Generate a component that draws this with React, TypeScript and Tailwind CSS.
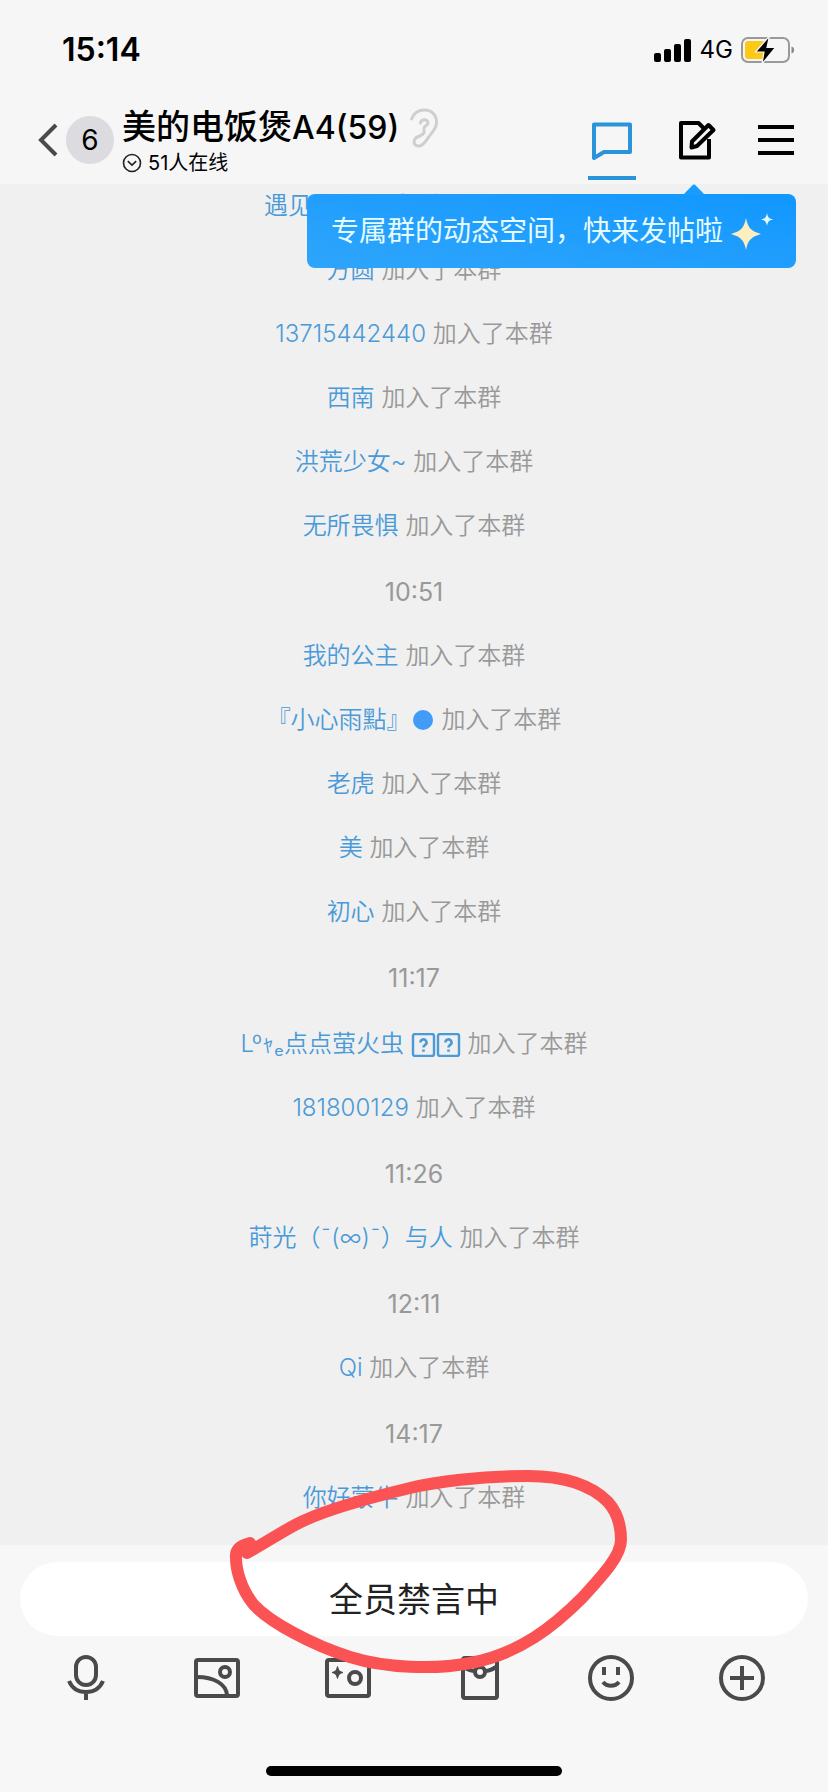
import React from 'react';

type Row = { kind: 'time'; text: string } | { kind: 'join'; name: React.ReactNode; style?: string };

const MissingGlyph = () => (
  <svg viewBox="0 0 25 24" className="inline-block w-[25px] h-6 align-[-5px]" fill="none">
    <rect x="2" y="1" width="21" height="22" rx="2" stroke="#4a9ad8" strokeWidth="2.400" />
    <path d="M9.5 9.5a3 3 0 1 1 4.6 2.4c-1.1.8-1.6 1.2-1.6 2.6M12.5 16.4v2.400" stroke="#4a9ad8" strokeWidth="2.600" />
  </svg>
);

const ROWS: Row[] = [
  { kind: 'join', name: '遇见', style: 'w-[300px] text-left' },
  { kind: 'join', name: '方圆' },
  { kind: 'join', name: '13715442440' },
  { kind: 'join', name: '西南' },
  { kind: 'join', name: '洪荒少女~' },
  { kind: 'join', name: '无所畏惧' },
  { kind: 'time', text: '10:51' },
  { kind: 'join', name: '我的公主' },
  {
    kind: 'join',
    name: (
      <>
        『小心雨點』<span className="inline-block w-5 h-5 mx-[2px] rounded-full bg-[#429bf7] align-[-2px]" />
      </>
    ),
  },
  { kind: 'join', name: '老虎' },
  { kind: 'join', name: '美' },
  { kind: 'join', name: '初心' },
  { kind: 'time', text: '11:17' },
  {
    kind: 'join',
    name: (
      <>
        Lºｬₑ点点萤火虫 <MissingGlyph />
        <MissingGlyph />
      </>
    ),
    style: 'pt-[2px]',
  },
  { kind: 'join', name: '181800129' },
  { kind: 'time', text: '11:26' },
  { kind: 'join', name: '莳光（¯(∞)¯）与人' },
  { kind: 'time', text: '12:11' },
  { kind: 'join', name: 'Qi' },
  { kind: 'time', text: '14:17' },
  { kind: 'join', name: '你好蒙牛' },
];

function StatusBar() {
  return (
    <div className="flex items-center justify-between h-[100px] pl-[62px] pr-[33px]">
      <span className="text-[32px] leading-10 font-semibold">15:14</span>
      <div className="flex items-center gap-2">
        <svg viewBox="0 0 38 24" className="w-[38px] h-6">
          <rect x="0" y="15" width="7" height="9" rx="2" />
          <rect x="10" y="11" width="7" height="13" rx="2" />
          <rect x="20" y="6" width="7" height="18" rx="2" />
          <rect x="30" y="1" width="7" height="23" rx="2" />
        </svg>
        <span className="text-2xl leading-8">4G</span>
        <svg viewBox="0 0 54 28" className="w-[54px] h-7" fill="none">
          <rect x="1" y="2" width="47" height="24" rx="6" stroke="#999" strokeWidth="2" />
          <rect x="4" y="5" width="20" height="18" rx="3" fill="#fcc917" />
          <path d="M50.500 10.500c3.500.5 3.500 6.500 0 7z" fill="#888" />
          <path d="M28.500 0 14.500 16h8.500L21 28l13.500-16.500H26z" fill="#000" stroke="#f6f6f6" strokeWidth="1.200" />
        </svg>
      </div>
    </div>
  );
}

function Header() {
  return (
    <header className="relative z-10 shrink-0 bg-[#f6f6f7] text-black">
      <StatusBar />
      <div className="flex h-[84px] pl-[38px] pr-[34px]">
        <button aria-label="返回" className="flex items-center h-20 gap-2">
          <svg viewBox="0 0 20 34" className="w-5 h-[34px]" fill="none" stroke="#4a4a4a" strokeWidth="4">
            <path d="M18 2 3 17l15 15" />
          </svg>
          <span className="grid place-items-center w-12 h-12 rounded-full bg-[#dcdbe0] text-[28px] leading-8">6</span>
        </button>
        <div className="flex flex-col ml-2 pt-1">
          <div className="flex items-center gap-[10px]">
            <h1 className="text-[34px] leading-[46px] font-medium whitespace-nowrap">
              美的电饭煲<span className="text-[32px]">A4(59)</span>
            </h1>
            <svg viewBox="0 0 30 40" className="w-[30px] h-10" fill="none" stroke="#cfcfd2" strokeWidth="3" strokeLinecap="round">
              <path d="M2.500 11C5 4.500 10 2 15.500 2 23 2 28 7.500 27.500 15c-.5 6-4 9-7.500 13.500-3 4-5.500 9-9.500 9.500-4 .5-6.500-2.500-5-6 .8-2 2.200-3 4.500-3.500" />
              <path d="M11.500 15c.5-4 6.500-4.500 7.500-.5.5 2.500-3.500 3.500-4 5.500-.4 2 1.500 3.500-1 6-1.500 1.300-3 1.500-4 2.500" />
            </svg>
          </div>
          <div className="flex items-center gap-[6px] text-xl leading-6">
            <svg viewBox="0 0 20 20" className="w-5 h-5" fill="none" stroke="#222" strokeWidth="1.600">
              <circle cx="10" cy="10" r="8.500" />
              <path d="m5.800 8.200 4.200 4 4.200-4" />
            </svg>
            51人在线
          </div>
        </div>
        <nav className="flex ml-auto gap-[41px]">
          <button aria-label="聊天" className="flex flex-col items-center w-12 pt-[22px] border-b-4 border-[#2b93d9] mb-1">
            <svg viewBox="0 0 40 38" className="w-10 h-[38px]" fill="none" stroke="#2b93d9" strokeWidth="4" strokeLinejoin="round">
              <path d="M2 2.500h36v27.500H12L2 36z" />
            </svg>
          </button>
          <button aria-label="发帖" className="w-10 h-20 flex items-center justify-center">
            <svg viewBox="0 0 40 40" className="w-10 h-10" fill="none" stroke="#000" strokeWidth="4" strokeLinejoin="round">
              <path d="M27 8.500 21.500 3H4v34.500h28V19" />
              <path d="m31.500 5 5 5L20 26l-5.500 1.500.5-6z" />
            </svg>
          </button>
          <button aria-label="菜单" className="h-20 flex flex-col items-center justify-center gap-[9px]">
            <span className="w-9 h-1 bg-black" />
            <span className="w-9 h-1 bg-black" />
            <span className="w-9 h-1 bg-black" />
          </button>
        </nav>
      </div>
      <Tooltip />
    </header>
  );
}

function Tooltip() {
  return (
    <div className="absolute right-8 top-[194px] flex items-center h-[74px] pl-6 pr-[19px] rounded-lg bg-linear-to-tr from-[#2ea5fb] to-[#0e97ff] text-[28px] leading-9 text-[#e4fbff] whitespace-nowrap">
      <svg viewBox="0 0 22 11" className="absolute right-[91px] -top-[10px] w-[22px] h-[11px]" fill="#189cfd">
        <path d="M0 11 10 .8q1-.8 2 0L22 11z" />
      </svg>
      专属群的动态空间，快来发帖啦
      <svg viewBox="0 0 46 40" className="w-[46px] h-10 ml-2">
        <path d="M15 7c2 10 5 13 15 16-10 3-13 6-15 16C13 29 10 26 0 23 10 20 13 17 15 7z" fill="#fdeec0" />
        <path d="M36 2c.8 4.500 1.800 5.500 6 6.500-4.200 1-5.200 2-6 6.500-.8-4.500-1.800-5.500-6-6.500 4.200-1 5.200-2 6-6.500z" fill="#e4fbff" />
      </svg>
    </div>
  );
}

function Messages() {
  return (
    <main className="flex-1 min-h-0 overflow-hidden flex flex-col justify-end pb-[15px] text-2xl text-[#999]">
      {ROWS.map((row, i) =>
        row.kind === 'time' ? (
          <time key={i} className="shrink-0 h-[66px] text-[25px] leading-[68px] text-center">
            {row.text}
          </time>
        ) : (
          <p key={i} className={`shrink-0 mx-auto leading-[64px] whitespace-nowrap font-[350] ${row.style ?? ''}`}>
            <a href="#" className="text-[#4a9ad8]">{row.name}</a> 加入了本群
          </p>
        )
      )}
    </main>
  );
}

const TOOLS = [
  {
    label: '语音',
    icon: (
      <>
        <rect x="14" y="3" width="20" height="28" rx="10" />
        <path d="M7 27c3 7 9 11 17 11s14-4 17-11M24 38v8" />
      </>
    ),
  },
  {
    label: '图片',
    icon: (
      <>
        <rect x="3" y="6" width="42" height="36" rx="2" />
        <circle cx="32" cy="18" r="5" />
        <path d="M4 23c17 0 29 7 30 18" />
      </>
    ),
  },
  {
    label: '拍摄',
    icon: (
      <>
        <rect x="3" y="6" width="42" height="36" rx="2" />
        <circle cx="31" cy="24" r="6" />
        <path d="M13.500 12.500c1 4 2 5 5.500 6-3.500 1-4.500 2-5.500 6-1-4-2-5-5.500-6 3.500-1 4.500-2 5.500-6z" fill="#4a4a4a" strokeWidth="1" />
      </>
    ),
  },
  {
    label: '红包',
    icon: (
      <>
        <rect x="7" y="4" width="34" height="40" rx="2" />
        <circle cx="24" cy="18" r="5" />
        <path d="M8 13c3 2 7 4 11 4M40 13c-3 2-7 4-11 4" />
      </>
    ),
  },
  {
    label: '表情',
    icon: (
      <>
        <circle cx="24" cy="24" r="21" />
        <path d="M17 13v8M31 13v8M16 28c4 5 12 5 16 0" />
      </>
    ),
  },
  {
    label: '更多',
    icon: (
      <>
        <circle cx="24" cy="24" r="21" />
        <path d="M24 12v24M12 24h24" />
      </>
    ),
  },
];

function Footer() {
  return (
    <footer className="relative shrink-0 bg-[#f7f7f7] pt-[17px] pb-4">
      <div className="px-5">
        <input
          aria-label="消息"
          readOnly
          value="全员禁言中"
          className="block w-full h-[74px] pb-1 rounded-full bg-white text-center text-[34px] leading-[46px] text-[#222] outline-none"
        />
      </div>
      <div className="flex justify-between mt-[18px] px-[62px]">
        {TOOLS.map((tool) => (
          <button key={tool.label} aria-label={tool.label}>
            <svg viewBox="0 0 48 48" className="w-12 h-12" fill="none" stroke="#4a4a4a" strokeWidth="4">
              {tool.icon}
            </svg>
          </button>
        ))}
      </div>
      <div className="mx-auto mt-16 w-[296px] h-[10px] rounded-full bg-black" />

      {/* hand-drawn marker ring */}
      <svg
        viewBox="0 0 420 220"
        className="absolute left-1/2 -ml-[194px] -top-[85px] w-[420px] h-[220px] pointer-events-none"
        fill="none"
        stroke="#fb5254"
        strokeWidth="12"
        strokeLinecap="round"
        strokeLinejoin="round"
      >
        <path d="M30 83C20 86 15 89 16 98C16 108 20 128 34 145C50 162 90 184 130 197C165 208 215 210 250 203C300 194 335 165 362 138C385 113 401 95 401 80C401 65 397 52 388 42C372 26 345 16 308 16C260 16 215 22 190 28C140 40 95 54 75 65C60 73 45 83 27 93L24 86" />
      </svg>
    </footer>
  );
}

export default function App() {
  return (
    <div className="flex flex-col h-screen overflow-hidden bg-[#f0f0f0] font-[Inter,'Noto_Sans_CJK_SC',sans-serif]">
      <Header />
      <Messages />
      <Footer />
    </div>
  );
}
